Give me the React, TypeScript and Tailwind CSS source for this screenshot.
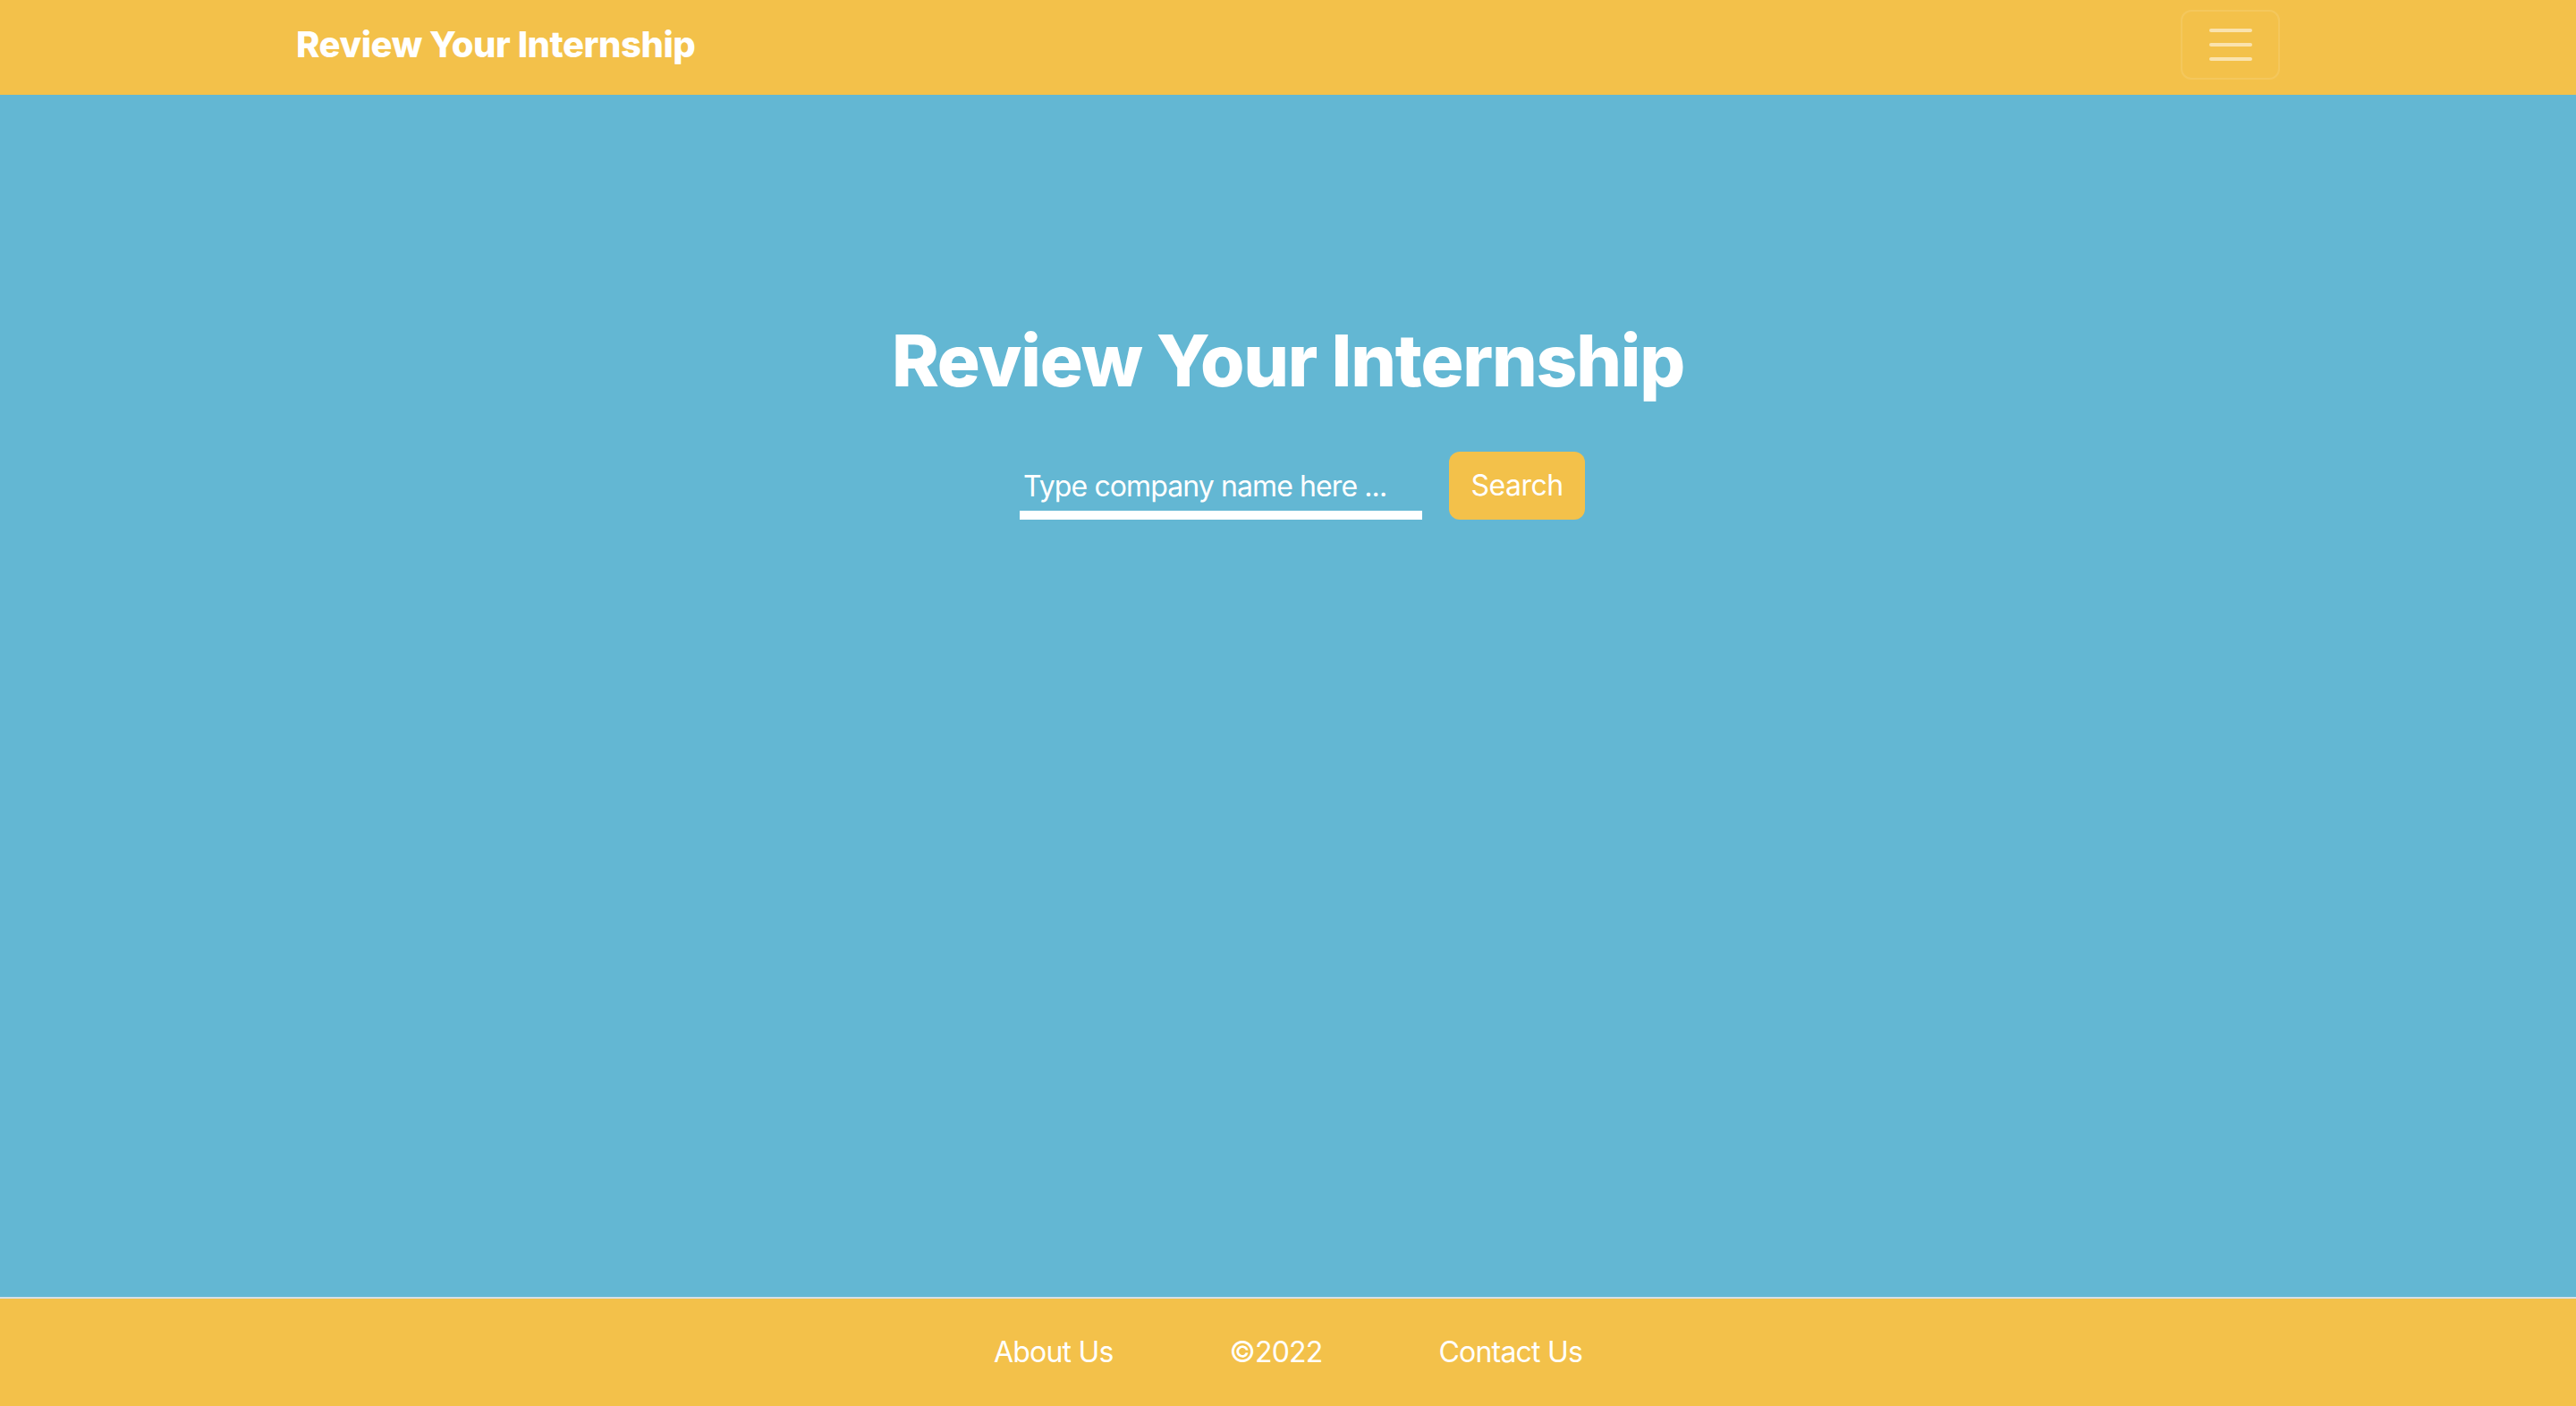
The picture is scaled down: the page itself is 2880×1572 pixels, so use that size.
export default function App() {
  return (
    <div className="min-h-screen flex flex-col bg-[#63b7d3] text-white font-['Inter','Liberation_Sans',sans-serif]">
      {/* navbar */}
      <nav className="bg-[#f3c14a] pt-[11px] pb-[17px]">
        <div className="mx-auto w-[2280px] px-[24px] flex items-center justify-between">
          <a href="#" className="pl-[7px] text-[40px] leading-[60px] font-extrabold tracking-[-0.45px]">
            Review Your Internship
          </a>
          <button className="mr-[7px] w-[111px] h-[78px] rounded-[12px] border-2 border-white/10 flex flex-col items-center justify-center gap-[12px]">
            <span className="block w-[48px] h-[4px] rounded-full bg-white/55" />
            <span className="block w-[48px] h-[4px] rounded-full bg-white/55" />
            <span className="block w-[48px] h-[4px] rounded-full bg-white/55" />
          </button>
        </div>
      </nav>

      {/* main */}
      <main className="flex-1 flex flex-col items-center pt-[249px]">
        <h1 className="text-[80px] leading-[96px] font-extrabold tracking-[-1.2px]">Review Your Internship</h1>
        <form className="mt-[54px] flex items-end gap-[30px] pl-[32px]" onSubmit={(e) => e.preventDefault()}>
          <input
            type="text"
            placeholder="Type company name here ..."
            className="w-[450px] bg-transparent border-b-[10px] border-white pl-[4px] pb-[8px] text-[32px] leading-[39px] tracking-[-0.9px] text-white placeholder:text-white outline-none"
          />
          <button className="w-[152px] h-[76px] rounded-[12px] bg-[#f3c14a] text-[32px] leading-[48px] tracking-[-0.5px] text-white">
            Search
          </button>
        </form>
      </main>

      {/* footer */}
      <footer className="bg-[#f3c14a] border-t-2 border-[#d8e0e3] h-[122px] flex items-center justify-center gap-[130px] text-[32px] leading-[48px] tracking-[-0.8px]">
        <a href="#">About Us</a>
        <span>©2022</span>
        <a href="#">Contact Us</a>
      </footer>
    </div>
  );
}
